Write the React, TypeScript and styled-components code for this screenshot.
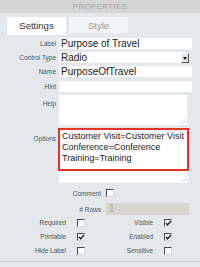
import { Fragment } from "react"
import styled, { createGlobalStyle } from "styled-components"

const GlobalStyle = createGlobalStyle`
  html, body {
    margin: 0;
    padding: 0;
    background: #e4e8ea;
  }
  body {
    font-family: "Liberation Sans", Arial, sans-serif;
  }
`

const Panel = styled.div`
  width: 200px;
  height: 267px;
  background: #e4e8ea;
  display: flex;
  flex-direction: column;
  overflow: hidden;
`

const Header = styled.div`
  height: 13px;
  background: #d5d5d5;
  color: #a3a3a3;
  font-size: 8px;
  letter-spacing: 0.3px;
  line-height: 14px;
  text-align: center;
`

const TabBar = styled.div`
  display: flex;
  gap: 3px;
  padding: 4px 0 0 7px;
  height: 18px;
  align-items: flex-start;
`

const Tab = styled.div<{ $active?: boolean }>`
  width: 59px;
  height: ${({ $active }) => ($active ? "18px" : "16px")};
  background: ${({ $active }) => ($active ? "#ffffff" : "#f2f4f5")};
  color: ${({ $active }) => ($active ? "#333333" : "#9a9a9a")};
  font-size: 9.5px;
  line-height: 18px;
  text-align: center;
`

const Body = styled.div`
  display: flex;
  flex-direction: column;
  padding-top: 3px;
  flex: 1;
  border-bottom: 1px solid #cfd4d7;
  margin-bottom: 5px;
`

const FieldGrid = styled.div`
  display: grid;
  grid-template-columns: 56px 133px;
  column-gap: 3px;
`

const FieldLabel = styled.div<{ $top?: number; $h: number }>`
  height: ${({ $h }) => $h}px;
  color: #4f5458;
  font-size: 6.5px;
  text-align: right;
  line-height: ${({ $top }) => ($top ? "8px" : "11px")};
  padding-top: ${({ $top }) => $top ?? 0}px;
  box-sizing: border-box;
  white-space: nowrap;
`

const Cell = styled.div<{ $h: number }>`
  height: ${({ $h }) => $h}px;
  position: relative;
`

const TextBox = styled.div`
  width: 100%;
  height: 11px;
  background: #ffffff;
  color: #1a1a1a;
  font-size: 10px;
  line-height: 11px;
  padding-left: 2px;
  box-sizing: border-box;
  white-space: nowrap;
`

const SelectBox = styled.div`
  width: 130px;
  height: 11px;
  background: #ffffff;
  color: #1a1a1a;
  font-size: 10px;
  line-height: 11px;
  padding-left: 2px;
  box-sizing: border-box;
  display: flex;
  justify-content: space-between;
`

const DropButton = styled.div`
  width: 8px;
  height: 10px;
  margin-top: 1px;
  background: #e4e4e4;
  border-right: 1px solid #555;
  border-bottom: 1px solid #555;
  border-top: 1px solid #fff;
  border-left: 1px solid #fff;
  box-sizing: border-box;
  display: flex;
  align-items: center;
  justify-content: center;
`

const Area = styled.div<{ $w: number; $h: number }>`
  width: ${({ $w }) => $w}px;
  height: ${({ $h }) => $h}px;
  background: #ffffff;
  position: relative;
  color: #1a1a1a;
  font-size: 9px;
  line-height: 11px;
  padding: 3px 0 0 3px;
  box-sizing: border-box;
  white-space: nowrap;
`

const Grip = styled.svg`
  position: absolute;
  right: 1px;
  bottom: 1px;
`

const Highlight = styled.div`
  position: absolute;
  left: -1px;
  top: 0;
  width: 131px;
  height: 43px;
  border: 2px solid #e5332b;
  box-sizing: border-box;
`

const SubGrid = styled.div`
  display: grid;
  grid-template-columns: 101px 83px;
  column-gap: 5px;
  row-gap: 6px;
  padding-top: 6px;
  align-items: center;
`

const SubLabel = styled.div`
  color: #4f5458;
  font-size: 6.5px;
  text-align: right;
  white-space: nowrap;
`

const Disabled = styled.div`
  height: 12px;
  background: #d9d5cf;
  color: #a9a49c;
  font-size: 10px;
  line-height: 12px;
  padding-left: 3px;
`

const CheckGrid = styled.div`
  display: grid;
  grid-template-columns: 77px 8px 79px 8px;
  row-gap: 6px;
  padding-top: 4px;
  align-items: center;
`

const CheckLabel = styled.div`
  color: #4f5458;
  font-size: 6.5px;
  text-align: right;
  padding-right: 11px;
  white-space: nowrap;
  line-height: 8px;
`

const Box = styled.div`
  width: 8px;
  height: 8px;
  background: #ffffff;
  border-top: 1px solid #4a4a4a;
  border-left: 1px solid #4a4a4a;
  border-bottom: 1px solid #d6d6d6;
  border-right: 1px solid #d6d6d6;
  box-sizing: border-box;
  position: relative;
`

const Tick = styled.svg`
  position: absolute;
  left: 0;
  top: 0;
`

const Check = ({ checked }: { checked?: boolean }) => (
  <Box>
    {checked && (
      <Tick width="7" height="7" viewBox="0 0 7 7">
        <path d="M1 3 L2.6 5 L6 0.8" stroke="#111" strokeWidth="1.3" fill="none" />
      </Tick>
    )}
  </Box>
)

const ResizeGrip = () => (
  <Grip width="6" height="6" viewBox="0 0 6 6">
    {[
      [5, 1],
      [3, 3],
      [5, 3],
      [1, 5],
      [3, 5],
      [5, 5],
    ].map(([x, y]) => (
      <rect key={`${x}-${y}`} x={x - 0.5} y={y - 0.5} width="1" height="1" fill="#b8bcbf" />
    ))}
  </Grip>
)

const checks: [string, boolean, string, boolean][] = [
  ["Required", false, "Visible", true],
  ["Printable", true, "Enabled", true],
  ["Hide Label", false, "Sensitive", false],
]

export default function App() {
  return (
    <>
      <GlobalStyle />
      <Panel>
        <Header>PROPERTIES</Header>
        <TabBar>
          <Tab $active>Settings</Tab>
          <Tab>Style</Tab>
        </TabBar>
        <Body>
          <FieldGrid>
            <FieldLabel $h={14}>Label</FieldLabel>
            <Cell $h={14}>
              <TextBox>Purpose of Travel</TextBox>
            </Cell>
            <FieldLabel $h={14}>Control Type</FieldLabel>
            <Cell $h={14}>
              <SelectBox>
                Radio
                <DropButton>
                  <svg width="4" height="3" viewBox="0 0 4 3">
                    <path d="M0 0 H4 L2 3 Z" fill="#111" />
                  </svg>
                </DropButton>
              </SelectBox>
            </Cell>
            <FieldLabel $h={15}>Name</FieldLabel>
            <Cell $h={15}>
              <TextBox>PurposeOfTravel</TextBox>
            </Cell>
            <FieldLabel $h={14}>Hint</FieldLabel>
            <Cell $h={14}>
              <TextBox />
            </Cell>
            <FieldLabel $h={33} $top={5}>
              Help
            </FieldLabel>
            <Cell $h={33}>
              <Area $w={128} $h={30}>
                <ResizeGrip />
              </Area>
            </Cell>
            <FieldLabel $h={55} $top={7}>
              Options
            </FieldLabel>
            <Cell $h={55}>
              <Area $w={129} $h={55}>
                Customer Visit=Customer Visit
                <br />
                Conference=Conference
                <br />
                Training=Training
                <ResizeGrip />
              </Area>
              <Highlight />
            </Cell>
          </FieldGrid>
          <SubGrid>
            <SubLabel>Comment</SubLabel>
            <Check />
            <SubLabel># Rows</SubLabel>
            <Disabled>1</Disabled>
          </SubGrid>
          <CheckGrid>
            {checks.map(([a, ac, b, bc]) => (
              <Fragment key={a}>
                <CheckLabel>{a}</CheckLabel>
                <Check checked={ac} />
                <CheckLabel>{b}</CheckLabel>
                <Check checked={bc} />
              </Fragment>
            ))}
          </CheckGrid>
        </Body>
      </Panel>
    </>
  )
}
